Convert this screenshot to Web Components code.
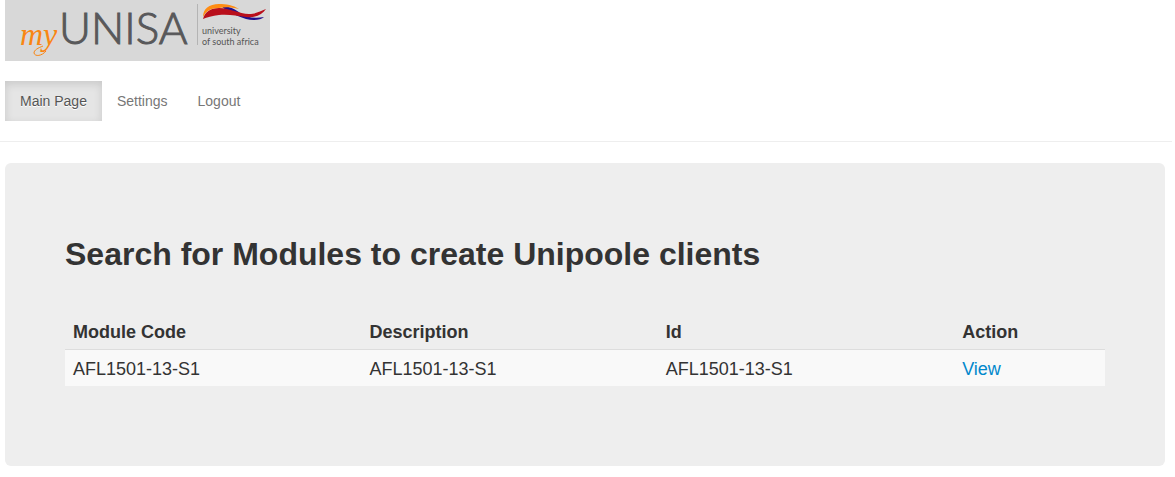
<!DOCTYPE html>
<html lang="en">
<head>
<meta charset="utf-8">
<meta name="viewport" content="width=device-width, initial-scale=1">
<title>myUnisa - Modules</title>
<style>
body { margin: 0; background: #fff; color: #333; font: 14px/20px "Liberation Sans", Arial, sans-serif; }
</style>
</head>
<body>
<portal-page>
  <portal-logo slot="brand"></portal-logo>
  <portal-nav slot="nav">
    <nav-link href="#main" current>Main Page</nav-link>
    <nav-link href="#settings">Settings</nav-link>
    <nav-link href="#logout">Logout</nav-link>
  </portal-nav>
  <hero-panel>
    <span slot="title">Search for Modules to create Unipoole clients</span>
    <module-table></module-table>
  </hero-panel>
</portal-page>

<template id="portal-page">
  <style>
    :host { display: block; }
    header { display: flex; flex-direction: column; align-items: flex-start; gap: 20px; padding: 0 5px 20px; margin-right: 3px; border-bottom: 1px solid #eee; }
    main { padding: 21px 10px 11px 5px; }
  </style>
  <header><slot name="brand"></slot><slot name="nav"></slot></header>
  <main><slot></slot></main>
</template>

<template id="portal-logo">
  <style>
    :host { display: block; background: #d8d8d8; }
    svg { display: block; }
    .my { font: italic 32px "Liberation Serif", serif; fill: #f98613; }
    .name { font: 300 44px Lato, sans-serif; fill: #58585a; stroke: #58585a; stroke-width: 1; }
    .tag { font: 9px Lato, sans-serif; fill: #555; }
  </style>
  <svg width="265" height="61" viewBox="0 0 265 61" role="img" aria-label="myUNISA, university of south africa">
    <text class="my" x="15" y="45">my</text>
    <path d="M41 51C37 56 30 57 29 53C29 50 33 48 38 46" fill="none" stroke="#f98613"/>
    <text class="name" x="54" y="44">UNISA</text>
    <path d="M192.500 4V45" stroke="#b4b4b4"/>
    <path d="M216 6C224 6 230 9 235 13C241 17 249 19 259 17C256 20 248 21 241 19C234 17 229 14 222 11Z" fill="#21108d"/>
    <path d="M198 19C200 12 205 8 214 8C225 8 234 14 244 14C251 14 255 11 261 9C257 15 250 18 241 17C232 16 224 14 214 15C207 16 202 17 198 19Z" fill="#b90f1b"/>
    <path d="M198 17C198 9 204 4 214 4C221 4 228 5 234 9C226 7 220 7 214 8C206 8 201 11 198 17Z" fill="#ff8c13"/>
    <text class="tag" x="197" y="34">university</text>
    <text class="tag" x="197" y="45">of south africa</text>
  </svg>
</template>

<template id="portal-nav">
  <style>
    :host { display: block; }
    nav { display: flex; flex-wrap: wrap; }
  </style>
  <nav aria-label="Main"><slot></slot></nav>
</template>

<template id="nav-link">
  <style>
    :host { display: block; }
    a { display: block; padding: 10px 15px; color: #777; text-decoration: none; text-shadow: 0 1px 0 #fff; }
    a:hover { color: #333; }
    a[aria-current] { color: #555; background: #e5e5e5; box-shadow: inset 0 3px 8px rgba(0, 0, 0, .125); }
  </style>
  <a><slot></slot></a>
</template>

<template id="hero-panel">
  <style>
    :host { display: block; padding: 60px; border-radius: 6px; background: #eee; }
    h1 { margin: 11px 0 39px; font-size: 32px; line-height: 40px; font-weight: bold; }
  </style>
  <h1><slot name="title"></slot></h1>
  <slot></slot>
</template>

<template id="module-table">
  <style>
    :host { display: block; margin-bottom: 20px; font-size: 18px; }
    table { width: 100%; table-layout: fixed; border-collapse: separate; border-spacing: 0; }
    col.wide { width: 28.5%; }
    th, td { padding: 9px 8px 7px; text-align: left; vertical-align: top; }
    td { border-top: 1px solid #ddd; background: #f9f9f9; }
    a { color: #08c; text-decoration: none; }
    a:hover { text-decoration: underline; }
  </style>
  <table>
    <colgroup><col class="wide"><col class="wide"><col class="wide"><col></colgroup>
    <thead><tr><th scope="col">Module Code</th><th scope="col">Description</th><th scope="col">Id</th><th scope="col">Action</th></tr></thead>
    <tbody><tr><td>AFL1501-13-S1</td><td>AFL1501-13-S1</td><td>AFL1501-13-S1</td><td><a href="#view">View</a></td></tr></tbody>
  </table>
</template>

<script>
class TemplateElement extends HTMLElement {
  constructor() {
    super();
    const template = document.getElementById(this.localName);
    this.attachShadow({ mode: "open" }).append(template.content.cloneNode(true));
  }
}
class NavLink extends TemplateElement {
  connectedCallback() {
    const link = this.shadowRoot.querySelector("a");
    link.href = this.getAttribute("href");
    if (this.hasAttribute("current")) link.setAttribute("aria-current", "page");
  }
}
customElements.define("portal-page", class extends TemplateElement {});
customElements.define("portal-logo", class extends TemplateElement {});
customElements.define("portal-nav", class extends TemplateElement {});
customElements.define("nav-link", NavLink);
customElements.define("hero-panel", class extends TemplateElement {});
customElements.define("module-table", class extends TemplateElement {});
</script>
</body>
</html>
